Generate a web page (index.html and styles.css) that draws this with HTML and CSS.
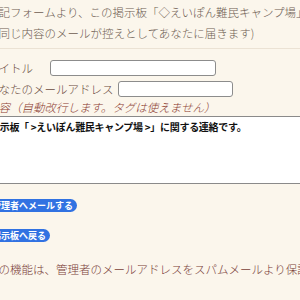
FILE: index.html
```html
<!DOCTYPE html>
<html lang="ja">
<head>
    <meta charset="UTF-8">
    <title>管理者へメール</title>
    <link rel="stylesheet" href="styles.css">
</head>
<body>
    <div class="page">
        <!-- Intro -->
        <p class="intro">上記フォームより、この掲示板「◇えいぽん難民キャンプ場」の管理者へメールを送信できます。<br>（同じ内容のメールが控えとしてあなたに届きます)</p>

        <!-- Mail form -->
        <form class="mail-form">
            <div class="row">
                <label>タイトル</label>
                <input type="text" class="field field-title">
            </div>
            <div class="row">
                <label>あなたのメールアドレス</label>
                <input type="text" class="field field-mail">
            </div>
            <div class="row note">内容（自動改行します。タグは使えません）</div>
            <textarea class="body-text">掲示板「 &gt;えいぽん難民キャンプ場 &gt;」に関する連絡です。</textarea>

            <div class="buttons">
                <a href="#" class="pill">管理者へメールする</a>
                <a href="#" class="pill">掲示板へ戻る</a>
            </div>
        </form>

        <p class="footnote">この機能は、管理者のメールアドレスをスパムメールより保護するためのものです。</p>
    </div>
</body>
</html>
```

FILE: styles.css
```css
/* General Page Styles */
body, html {
    margin: 0;
    height: 100%;
    overflow: hidden;
    background-color: #fbf6ec;
}

body {
    font-family: "Noto Sans CJK JP", "Noto Sans", sans-serif;
    font-size: 11.5px;
    font-weight: 300;
    color: #6e5d52;
}

/* page is shifted a little to the left, as in the capture */
.page {
    margin-left: -13px;
    width: 380px;
}

/* Intro text */
.intro {
    margin: 0;
    height: 42px;
    padding: 2px 0 4px;
    line-height: 21px;
    white-space: nowrap;
    border-bottom: 1px solid #ebe2d4;
}

/* Form rows */
.mail-form {
    margin: 0;
    padding-top: 10px;
}

.row {
    display: flex;
    align-items: center;
    height: 17px;
    margin-bottom: 4px;
    color: #6b4b40;
    white-space: nowrap;
}

.field {
    height: 16px;
    box-sizing: border-box;
    border: 1px solid #8c8c8c;
    border-radius: 3px;
    background-color: white;
    padding: 0 3px;
}

.field-title {
    margin-left: 17px;
    width: 166px;
}

.field-mail {
    margin-left: 4px;
    width: 115px;
}

.note {
    margin-top: -3px;
    margin-bottom: 1px;
    font-style: italic;
    color: #8b3b30;
}

/* Message body */
.body-text {
    display: block;
    width: 380px;
    height: 68px;
    box-sizing: border-box;
    margin: 0;
    padding: 2px 4px 2px 3px;
    border: none;
    border-top: 1px solid #8a8a8a;
    border-bottom: 1px solid #8a8a8a;
    background-color: white;
    font-family: "Noto Sans CJK JP", sans-serif;
    font-size: 10px;
    font-weight: 700;
    letter-spacing: -0.3px;
    color: #111;
    resize: none;
}

/* Blue pill buttons */
.buttons {
    display: flex;
    flex-direction: column;
    align-items: flex-start;
    gap: 17px;
    padding-top: 15px;
}

.pill {
    display: block;
    height: 13px;
    line-height: 13px;
    padding: 0 4px 0 5px;
    border-radius: 7px;
    background-color: #3172e2;
    color: white;
    font-size: 9px;
    font-weight: 700;
    text-decoration: none;
}

/* Bottom note */
.footnote {
    margin: 19px 0 0;
    font-size: 11.5px;
    color: #7a4038;
    white-space: nowrap;
}
```
